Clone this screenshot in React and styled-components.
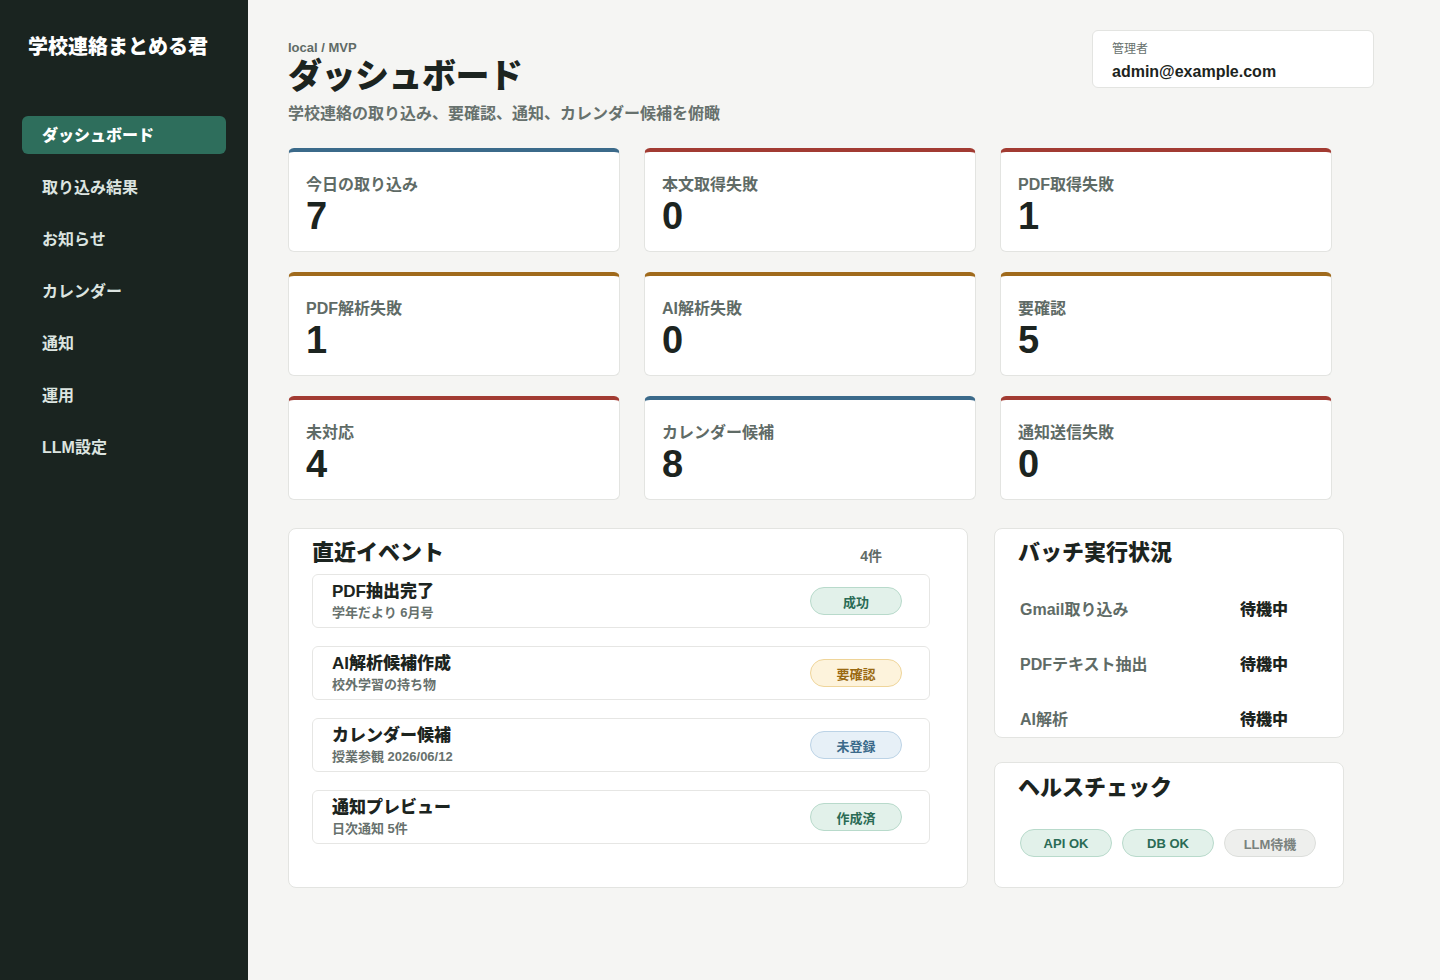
import styled, { createGlobalStyle } from "styled-components";

const GlobalStyle = createGlobalStyle`
  body {
    margin: 0;
    background: #f5f5f3;
    font-family: "Liberation Sans", "Noto Sans CJK JP", sans-serif;
    color: #1c2420;
  }
  * { box-sizing: border-box; }
`;

const Shell = styled.div`
  display: grid;
  grid-template-columns: 248px 1fr;
  min-height: 980px;
`;

const Sidebar = styled.aside`
  background: #1a2420;
  padding: 35px 22px;
`;

const Brand = styled.div`
  margin-left: 6px;
  color: #ffffff;
  font-size: 20px;
  font-weight: 900;
  line-height: 24px;
`;

const Nav = styled.nav`
  margin-top: 57px;
  display: flex;
  flex-direction: column;
  gap: 14px;
`;

const NavItem = styled.div`
  height: 38px;
  display: flex;
  align-items: center;
  padding: 0 0 2px 20px;
  border-radius: 6px;
  font-size: 16px;
  font-weight: ${(p) => (p.$active ? 900 : 700)};
  color: ${(p) => (p.$active ? "#ffffff" : "#dce4e0")};
  background: ${(p) => (p.$active ? "#2e6e5c" : "transparent")};
`;

const Main = styled.main`
  padding: 30px 40px 40px;
`;

const Header = styled.header`
  width: 1086px;
  display: flex;
  justify-content: space-between;
  align-items: flex-start;
`;

const TitleBlock = styled.div`
  padding-top: 11px;
`;

const Crumb = styled.div`
  font-size: 13px;
  font-weight: 700;
  color: #5f6b66;
  line-height: 14px;
`;

const Title = styled.h1`
  margin: 0;
  font-size: 34px;
  font-weight: 900;
  line-height: 42px;
  letter-spacing: -0.5px;
  color: #1c2420;
`;

const Subtitle = styled.p`
  margin: 7px 0 0;
  font-size: 16px;
  font-weight: 600;
  line-height: 20px;
  color: #67716d;
`;

const UserBox = styled.div`
  width: 282px;
  height: 58px;
  background: #ffffff;
  border: 1px solid #e3e4e1;
  border-radius: 6px;
  padding: 10px 19px 0;
`;

const UserRole = styled.div`
  font-size: 12px;
  color: #67716d;
  line-height: 16px;
`;

const UserMail = styled.div`
  margin-top: 5px;
  font-size: 16px;
  font-weight: 700;
  line-height: 20px;
  color: #1c2420;
`;

const StatGrid = styled.section`
  margin-top: 24px;
  width: 1044px;
  display: grid;
  grid-template-columns: repeat(3, 1fr);
  column-gap: 24px;
  row-gap: 20px;
`;

const StatCard = styled.div`
  height: 104px;
  background: #ffffff;
  border: 1px solid #e3e4e1;
  border-top: 4px solid ${(p) => p.$tone};
  border-radius: 6px;
  padding: 22px 17px 0;
`;

const StatLabel = styled.div`
  font-size: 16px;
  font-weight: 600;
  line-height: 22px;
  color: #5f6b66;
`;

const StatValue = styled.div`
  font-size: 38px;
  font-weight: 700;
  line-height: 40px;
  color: #1c2420;
`;

const Bottom = styled.section`
  margin-top: 28px;
  width: 1056px;
  display: grid;
  grid-template-columns: 680px 350px;
  column-gap: 26px;
`;

const Panel = styled.div`
  background: #ffffff;
  border: 1px solid #e3e4e1;
  border-radius: 8px;
  padding: ${(p) => p.$pad || "10px 23px 24px"};
  height: ${(p) => p.$h || "auto"};
  overflow: hidden;
`;

const SideColumn = styled.div`
  display: flex;
  flex-direction: column;
  gap: 24px;
`;

const PanelHead = styled.div`
  width: 570px;
  display: flex;
  justify-content: space-between;
  align-items: center;
`;

const PanelTitle = styled.h2`
  margin: 0;
  font-size: 22px;
  font-weight: 900;
  line-height: 28px;
  color: #1c2420;
`;

const Count = styled.span`
  font-size: 14px;
  font-weight: 600;
  color: #5f6b66;
  padding-top: 4px;
`;

const EventList = styled.div`
  margin-top: 7px;
  width: 618px;
  display: flex;
  flex-direction: column;
  gap: 18px;
`;

const EventRow = styled.div`
  height: 54px;
  border: 1px solid #e6e6e4;
  border-radius: 6px;
  padding: 0 27px 0 19px;
  display: flex;
  align-items: center;
  justify-content: space-between;
`;

const EventTitle = styled.div`
  font-size: 17px;
  font-weight: 900;
  line-height: 20px;
  color: #1c2420;
`;

const EventSub = styled.div`
  margin-top: 3px;
  font-size: 13px;
  font-weight: 600;
  line-height: 16px;
  color: #67716d;
`;

const tones = {
  green: { bg: "#e2f1ea", border: "#b8dacb", color: "#2a6b55" },
  amber: { bg: "#fdf3dc", border: "#efd59a", color: "#9a6a12" },
  blue: { bg: "#e7f0f7", border: "#bcd3e6", color: "#3b6a8a" },
  gray: { bg: "#eeefed", border: "#dcdedb", color: "#7a827e" },
};

const Pill = styled.span`
  width: 92px;
  height: 28px;
  border-radius: 14px;
  display: inline-flex;
  align-items: center;
  justify-content: center;
  font-size: 13px;
  font-weight: 700;
  background: ${(p) => tones[p.$tone].bg};
  border: 1px solid ${(p) => tones[p.$tone].border};
  color: ${(p) => tones[p.$tone].color};
`;

const BatchRows = styled.div`
  margin-top: 13px;
  padding-left: 2px;
`;

const BatchRow = styled.div`
  height: 55px;
  display: grid;
  grid-template-columns: 220px auto;
  align-items: center;
  font-size: 16px;
`;

const BatchLabel = styled.span`
  font-weight: 600;
  color: #5f6b66;
`;

const BatchValue = styled.span`
  font-weight: 900;
  color: #1c2420;
`;

const Chips = styled.div`
  margin-top: 27px;
  padding-left: 2px;
  display: flex;
  gap: 10px;
`;

const stats = [
  { label: "今日の取り込み", value: 7, tone: "#3b6a8a" },
  { label: "本文取得失敗", value: 0, tone: "#a23b32" },
  { label: "PDF取得失敗", value: 1, tone: "#a23b32" },
  { label: "PDF解析失敗", value: 1, tone: "#a06a1c" },
  { label: "AI解析失敗", value: 0, tone: "#a06a1c" },
  { label: "要確認", value: 5, tone: "#a06a1c" },
  { label: "未対応", value: 4, tone: "#a23b32" },
  { label: "カレンダー候補", value: 8, tone: "#3b6a8a" },
  { label: "通知送信失敗", value: 0, tone: "#a23b32" },
];

const events = [
  { title: "PDF抽出完了", sub: "学年だより 6月号", badge: "成功", tone: "green" },
  { title: "AI解析候補作成", sub: "校外学習の持ち物", badge: "要確認", tone: "amber" },
  { title: "カレンダー候補", sub: "授業参観 2026/06/12", badge: "未登録", tone: "blue" },
  { title: "通知プレビュー", sub: "日次通知 5件", badge: "作成済", tone: "green" },
];

const navItems = ["ダッシュボード", "取り込み結果", "お知らせ", "カレンダー", "通知", "運用", "LLM設定"];

const batches = ["Gmail取り込み", "PDFテキスト抽出", "AI解析"];

export default function App() {
  return (
    <>
      <GlobalStyle />
      <Shell>
        <Sidebar>
          <Brand>学校連絡まとめる君</Brand>
          <Nav>
            {navItems.map((item, i) => (
              <NavItem key={item} $active={i === 0}>
                {item}
              </NavItem>
            ))}
          </Nav>
        </Sidebar>
        <Main>
          <Header>
            <TitleBlock>
              <Crumb>local / MVP</Crumb>
              <Title>ダッシュボード</Title>
              <Subtitle>学校連絡の取り込み、要確認、通知、カレンダー候補を俯瞰</Subtitle>
            </TitleBlock>
            <UserBox>
              <UserRole>管理者</UserRole>
              <UserMail>admin@example.com</UserMail>
            </UserBox>
          </Header>

          <StatGrid>
            {stats.map((s) => (
              <StatCard key={s.label} $tone={s.tone}>
                <StatLabel>{s.label}</StatLabel>
                <StatValue>{s.value}</StatValue>
              </StatCard>
            ))}
          </StatGrid>

          <Bottom>
            <Panel>
              <PanelHead>
                <PanelTitle>直近イベント</PanelTitle>
                <Count>4件</Count>
              </PanelHead>
              <EventList>
                {events.map((e) => (
                  <EventRow key={e.title}>
                    <div>
                      <EventTitle>{e.title}</EventTitle>
                      <EventSub>{e.sub}</EventSub>
                    </div>
                    <Pill $tone={e.tone}>{e.badge}</Pill>
                  </EventRow>
                ))}
              </EventList>
            </Panel>
            <SideColumn>
              <Panel $h="210px" $pad="10px 23px 0">
                <PanelTitle>バッチ実行状況</PanelTitle>
                <BatchRows>
                  {batches.map((b) => (
                    <BatchRow key={b}>
                      <BatchLabel>{b}</BatchLabel>
                      <BatchValue>待機中</BatchValue>
                    </BatchRow>
                  ))}
                </BatchRows>
              </Panel>
              <Panel $h="126px" $pad="11px 23px 0">
                <PanelTitle>ヘルスチェック</PanelTitle>
                <Chips>
                  <Pill $tone="green">API OK</Pill>
                  <Pill $tone="green">DB OK</Pill>
                  <Pill $tone="gray">LLM待機</Pill>
                </Chips>
              </Panel>
            </SideColumn>
          </Bottom>
        </Main>
      </Shell>
    </>
  );
}
